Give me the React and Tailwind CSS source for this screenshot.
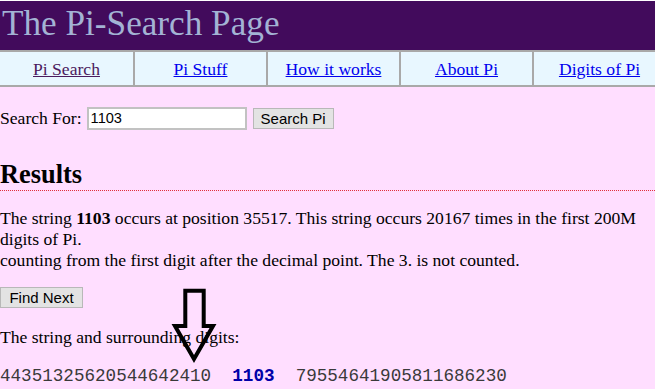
const navItems = [
  { label: "Pi Search", visited: true },
  { label: "Pi Stuff" },
  { label: "How it works" },
  { label: "About Pi" },
  { label: "Digits of Pi" },
];

function DownArrow() {
  return (
    <svg className="absolute left-[170px] top-[286px]" width="48" height="80" viewBox="170 286 48 80">
      <polygon
        points="185.3,290.7 203.7,290.7 203.7,326 213,326 194,359 175,326 185.3,326"
        fill="none"
        stroke="#000"
        strokeWidth="4"
        strokeLinejoin="miter"
      />
    </svg>
  );
}

export default function App() {
  return (
    <div className="relative w-[655px] h-[389px] overflow-hidden bg-[#ffdeff] font-['Liberation_Serif',serif] text-[17.6px] text-black">
      <header className="h-[50px] border-t border-white bg-[#420b5c] pl-[2px]">
        <h1 className="text-[35.2px] leading-[46px] text-[#a3b3d4]">The Pi-Search Page</h1>
      </header>

      <nav className="flex h-[37px] border-y-2 border-[#a9a9a9] bg-[#e8f7ff]">
        {navItems.map((item, i) => (
          <div
            key={item.label}
            className={`flex w-[133px] shrink-0 items-center justify-center pt-[2px] ${i > 0 ? "border-l-2 border-[#a9a9a9]" : ""}`}
          >
            <a href="#" className={`underline ${item.visited ? "text-[#4b1a5e]" : "text-[#0000ee]"}`}>
              {item.label}
            </a>
          </div>
        ))}
      </nav>

      <form className="mt-[18px] flex items-center" onSubmit={(e) => e.preventDefault()}>
        <label className="mr-[5px]">Search For:</label>
        <input
          defaultValue="1103"
          className="h-[23px] w-[160px] border-2 border-[#c2c2c2] bg-white px-[2px] font-['Liberation_Sans',sans-serif] text-[14.6px] outline-none"
        />
        <button className="ml-[6px] h-[21px] w-[81px] border border-[#b8b8b8] bg-[#e3e3e3] font-['Liberation_Sans',sans-serif] text-[15px] leading-none">
          Search Pi
        </button>
      </form>

      <h2 className="mt-[29px] border-b border-dotted border-[#e0303c] pb-[1px] text-[26.4px] font-bold leading-[29px]">
        Results
      </h2>

      <p className="mt-[17px] leading-[21px] whitespace-nowrap">
        The string <b>1103</b> occurs at position 35517. This string occurs 20167 times in the first 200M
        <br />
        digits of Pi.
        <br />
        counting from the first digit after the decimal point. The 3. is not counted.
      </p>

      <button className="mt-[16px] block h-[21px] w-[83px] border border-[#b8b8b8] bg-[#e3e3e3] font-['Liberation_Sans',sans-serif] text-[15px] leading-none">
        Find Next
      </button>

      <p className="mt-[19px] leading-[21px]">The string and surrounding digits:</p>

      <pre className="mt-[18px] font-['Liberation_Mono',monospace] text-[17.6px] leading-[21px] text-[#3a3a3a]">
        {"44351325620544642410  "}
        <b className="text-[#0000a8]">1103</b>
        {"  79554641905811686230"}
      </pre>

      <DownArrow />
    </div>
  );
}
